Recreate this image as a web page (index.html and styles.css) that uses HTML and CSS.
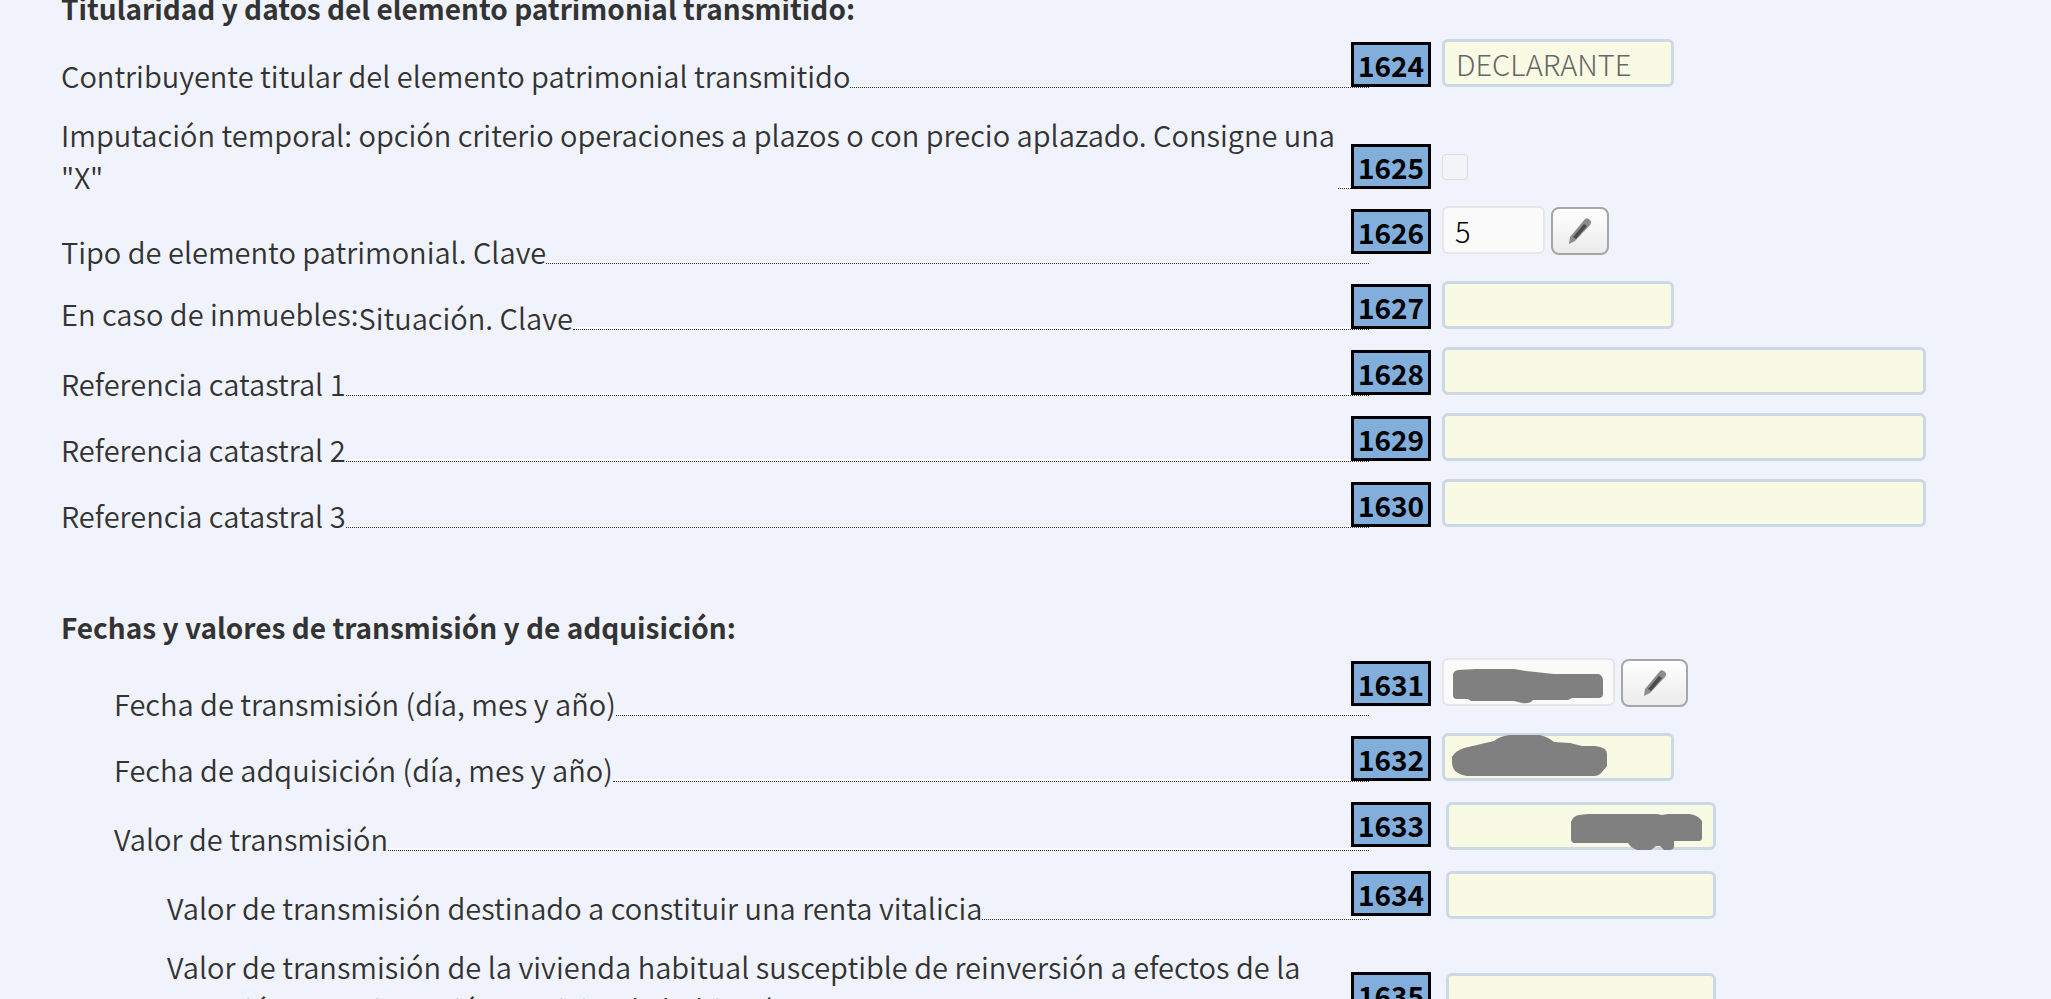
FILE: index.html
```html
<!DOCTYPE html>
<html lang="es">
<head>
  <meta charset="UTF-8" />
  <meta name="viewport" content="width=device-width, initial-scale=1.0"/>
  <title>Elemento patrimonial transmitido</title>
  <link rel="stylesheet" href="styles.css">
</head>
<body>
  <main class="form">
    <section>
      <h2>Titularidad y datos del elemento patrimonial transmitido:</h2>

      <div class="row">
        <div class="label"><label class="text" for="c1624">Contribuyente titular del elemento patrimonial transmitido</label><span class="leader"></span></div>
        <span class="code">1624</span>
        <div class="field"><input type="text" id="c1624" class="medium" value="DECLARANTE" /></div>
      </div>

      <div class="row">
        <div class="label"><label class="text" for="c1625">Imputación temporal: opción criterio operaciones a plazos o con precio aplazado. Consigne una "X"</label><span class="leader"></span></div>
        <span class="code bottom">1625</span>
        <div class="field bottom"><input type="checkbox" id="c1625" /></div>
      </div>

      <div class="row tall">
        <div class="label"><label class="text" for="c1626">Tipo de elemento patrimonial. Clave</label><span class="leader"></span></div>
        <span class="code">1626</span>
        <div class="field">
          <input type="text" id="c1626" class="small readonly" value="5" readonly />
          <button type="button" class="edit" aria-label="Editar">
            <svg class="pencil" viewBox="0 0 24 28"><path class="edge" d="M1 27 L2 20 L17 2 Q19 0 22 3 Q24 5 22 8 L7 24 Z"/><path class="core" d="M5 20 L16 7 L19 9 L8 22 Z"/></svg>
          </button>
        </div>
      </div>

      <div class="row">
        <div class="label"><span class="text prefix">En caso de inmuebles:</span><label class="text" for="c1627">Situación. Clave</label><span class="leader"></span></div>
        <span class="code">1627</span>
        <div class="field"><input type="text" id="c1627" class="medium" /></div>
      </div>

      <div class="row">
        <div class="label"><label class="text" for="c1628">Referencia catastral 1</label><span class="leader"></span></div>
        <span class="code">1628</span>
        <div class="field"><input type="text" id="c1628" class="large" /></div>
      </div>

      <div class="row">
        <div class="label"><label class="text" for="c1629">Referencia catastral 2</label><span class="leader"></span></div>
        <span class="code">1629</span>
        <div class="field"><input type="text" id="c1629" class="large" /></div>
      </div>

      <div class="row">
        <div class="label"><label class="text" for="c1630">Referencia catastral 3</label><span class="leader"></span></div>
        <span class="code">1630</span>
        <div class="field"><input type="text" id="c1630" class="large" /></div>
      </div>
    </section>

    <section>
      <h2>Fechas y valores de transmisión y de adquisición:</h2>

      <div class="row tall">
        <div class="label level-1"><label class="text" for="c1631">Fecha de transmisión (día, mes y año)</label><span class="leader"></span></div>
        <span class="code">1631</span>
        <div class="field">
          <input type="text" id="c1631" class="date readonly" readonly />
          <button type="button" class="edit wide" aria-label="Editar">
            <svg class="pencil" viewBox="0 0 24 28"><path class="edge" d="M1 27 L2 20 L17 2 Q19 0 22 3 Q24 5 22 8 L7 24 Z"/><path class="core" d="M5 20 L16 7 L19 9 L8 22 Z"/></svg>
          </button>
          <svg class="mask" viewBox="0 0 270 48"><path d="M11 17 Q11 13 16 12 L34 11 H72 L84 13 L112 16 H157 Q161 18 161 23 V37 Q160 40 157 40 H130 L126 42 H91 Q88 46 80 45 L72 43 H29 L26 41 H14 Q11 40 11 37 Z"/></svg>
        </div>
      </div>

      <div class="row">
        <div class="label level-1"><label class="text" for="c1632">Fecha de adquisición (día, mes y año)</label><span class="leader"></span></div>
        <span class="code">1632</span>
        <div class="field">
          <input type="text" id="c1632" class="medium" />
          <svg class="mask" viewBox="0 0 270 48"><path d="M10 24 Q13 18 22 15 L52 8 Q58 3 68 2 H98 Q106 4 112 9 L128 10 L140 13 H153 Q165 14 165 21 V33 L160 39 Q157 43 152 43 H25 Q18 42 13 38 Q10 34 10 30 Z"/></svg>
        </div>
      </div>

      <div class="row money">
        <div class="label level-1"><label class="text" for="c1633">Valor de transmisión</label><span class="leader"></span></div>
        <span class="code">1633</span>
        <div class="field">
          <input type="text" id="c1633" class="amount" />
          <svg class="mask" viewBox="0 0 270 48"><path d="M129 20 Q131 14 137 13 L146 12 H215 L220 13 L226 12 H247 Q256 13 260 19 V36 Q260 39 257 39 H232 V45 Q231 48 228 48 H222 L218 44 L214 44 L209 48 H195 Q189 46 186 41 H132 Q129 40 129 37 Z"/></svg>
        </div>
      </div>

      <div class="row money">
        <div class="label level-2"><label class="text" for="c1634">Valor de transmisión destinado a constituir una renta vitalicia</label><span class="leader"></span></div>
        <span class="code">1634</span>
        <div class="field"><input type="text" id="c1634" class="amount" /></div>
      </div>

      <div class="row">
        <div class="label level-2"><label class="text" for="c1635">Valor de transmisión de la vivienda habitual susceptible de reinversión a efectos de la exención por reinversión en vivienda habitual</label><span class="leader"></span></div>
        <span class="code deep">1635</span>
        <div class="field deep"><input type="text" id="c1635" class="amount" /></div>
      </div>
    </section>
  </main>
</body>
</html>
```
FILE: styles.css
```css
* {
  box-sizing: border-box;
}

body {
  margin: 0;
  height: 100vh;
  overflow: hidden;
  background-color: #f0f3fb;
  color: #333;
  font-family: "Noto Sans CJK JP", "Open Sans", sans-serif;
  font-size: 29px;
  font-weight: 350;
  line-height: 42px;
}

.form {
  margin-top: -13px;
  padding: 0 61px;
}

h2 {
  margin: 0 0 10px;
  font-size: 28px;
  font-weight: 700;
}

section + section {
  margin-top: 78px;
}

.row {
  display: grid;
  grid-template-columns: minmax(0, 1fr) 62px 559px;
  min-height: 49px;
  margin-bottom: 17px;
}

.row.tall {
  min-height: 58px;
}

.row.money {
  min-height: 52px;
  padding-top: 3px;
}

/* label followed by a dotted line up to the code box */
.label {
  display: flex;
  align-items: flex-end;
}

.level-1 {
  padding-left: 53px;
}

.level-2 {
  padding-left: 106px;
}

.text {
  padding-top: 8px;
  margin-bottom: -8px;
}

.prefix {
  margin-bottom: -4px;
}

.leader {
  flex: 1 0 31px;
  height: 3px;
  background-color: #fff;
  background-clip: padding-box;
  border-bottom: 1px dotted #333;
}

.code {
  width: 80px;
  height: 45px;
  margin: 3px 0 0 -18px;
  background-color: #82aedb;
  border: 3px solid #000;
  color: #000;
  font-size: 28px;
  font-weight: 700;
  line-height: 40px;
  text-align: center;
}

.money .code {
  margin-top: 0;
}

.code.bottom,
.code.deep {
  align-self: end;
}

.code.deep {
  margin-bottom: 4px;
}

.field {
  position: relative;
  display: flex;
  align-items: flex-start;
  gap: 6px;
  padding-left: 11px;
}

.field.bottom {
  align-items: flex-end;
  padding-bottom: 9px;
}

.field.deep {
  align-items: flex-end;
}

input[type="text"] {
  height: 48px;
  margin: 0;
  padding: 0 11px;
  background-color: #f8fae4;
  border: 3px solid #cdd8e6;
  border-radius: 6px;
  color: #666;
  font-family: inherit;
  font-size: 29px;
  font-weight: 300;
}

input[type="text"].readonly {
  background-color: #fafafa;
  border: 2px solid #e6e6e6;
  color: #000;
}

input.small {
  width: 103px;
}

input.date {
  width: 173px;
}

input.medium {
  width: 232px;
}

input.amount {
  width: 270px;
  margin-left: 4px;
  text-align: right;
}

input[type="text"].amount {
  margin-left: 4px;
}

input.large {
  width: 484px;
}

input[type="checkbox"] {
  appearance: none;
  width: 26px;
  height: 26px;
  margin: 0;
  background-color: #f3f4f8;
  border: 1px solid #dcdde1;
  border-radius: 4px;
}

.edit {
  display: flex;
  align-items: center;
  justify-content: center;
  width: 58px;
  height: 48px;
  margin-top: 1px;
  padding: 0;
  background: linear-gradient(#fff, #ebebeb);
  border: 2px solid #a6a6a6;
  border-radius: 8px;
  cursor: pointer;
}

.edit.wide {
  width: 67px;
}

.pencil {
  width: 24px;
  height: 28px;
}

.pencil .edge {
  fill: #8c8c8c;
}

.pencil .core {
  fill: #4a4a4a;
}

.mask {
  position: absolute;
  top: 0;
  left: 11px;
  width: 270px;
  height: 48px;
  fill: #808080;
  pointer-events: none;
}
```
